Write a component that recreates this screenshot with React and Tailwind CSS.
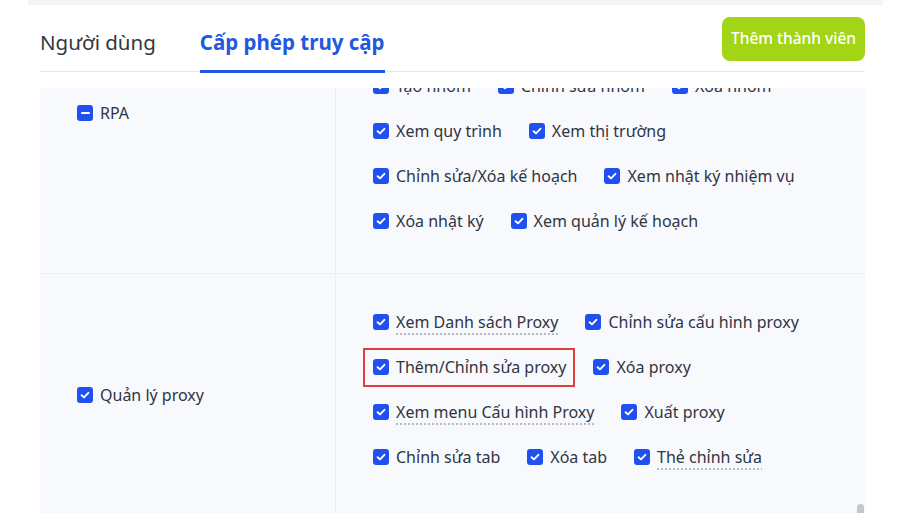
import React from 'react';

const rpaLines = [
  [{ label: 'Tạo nhóm' }, { label: 'Chỉnh sửa nhóm' }, { label: 'Xóa nhóm' }],
  [{ label: 'Xem quy trình' }, { label: 'Xem thị trường' }],
  [{ label: 'Chỉnh sửa/Xóa kế hoạch' }, { label: 'Xem nhật ký nhiệm vụ' }],
  [{ label: 'Xóa nhật ký' }, { label: 'Xem quản lý kế hoạch' }],
];

const proxyLines = [
  [{ label: 'Xem Danh sách Proxy', dotted: true }, { label: 'Chỉnh sửa cấu hình proxy' }],
  [{ label: 'Thêm/Chỉnh sửa proxy', marked: true }, { label: 'Xóa proxy' }],
  [{ label: 'Xem menu Cấu hình Proxy', dotted: true }, { label: 'Xuất proxy' }],
  [{ label: 'Chỉnh sửa tab' }, { label: 'Xóa tab' }, { label: 'Thẻ chỉnh sửa', dotted: true }],
];

const Box = ({ partial }) => (
  <span className="w-4 h-4 rounded-[3px] bg-[#2050f0] flex items-center justify-center shrink-0">
    {partial ? (
      <span className="w-[9px] h-[2.5px] bg-white rounded-sm"></span>
    ) : (
      <svg width="10" height="10" viewBox="0 0 10 10" fill="none">
        <path d="M1.6 5.2 4 7.4 8.4 2.8" stroke="white" strokeWidth="1.9" strokeLinecap="round" strokeLinejoin="round" />
      </svg>
    )}
  </span>
);

const Perm = ({ label, dotted, marked }) => (
  <div className="relative flex items-center gap-[7px] h-6">
    <Box />
    <span className={dotted ? 'underline decoration-dotted decoration-[#a0a6b2] underline-offset-[6px]' : ''}>
      {label}
    </span>
    {/* annotation box */}
    {marked && <span className="absolute -left-[10px] -right-[9px] -top-[7px] -bottom-[8px] border-2 border-[#e0403a]"></span>}
  </div>
);

const PermLines = ({ lines }) => (
  <div>
    {lines.map((line, i) => (
      <div key={i} className="h-[45px] flex items-center gap-x-[27px]">
        {line.map(p => (
          <Perm key={p.label} {...p} />
        ))}
      </div>
    ))}
  </div>
);

export default function App() {
  return (
    <div className="relative w-[912px] h-[513px] bg-white overflow-hidden font-['Noto_Sans',sans-serif] text-[#2f3542]">
      <div className="ml-[28px] w-[855px] h-full flex flex-col">
        <div className="h-[5px] bg-[#f3f4f6] shrink-0"></div>

        {/* Header */}
        <div className="px-[12px] pr-[18px] shrink-0">
          <div className="pt-3 flex items-start justify-between border-b border-[#e4e6eb]">
            <div className="flex gap-[44px] text-[20.5px] leading-[28px]">
              <div className="pt-[11px] pb-[14px] border-b-[3px] border-transparent -mb-[2px] text-[#333840]">
                Người dùng
              </div>
              <div className="pt-[11px] pb-[14px] border-b-[3px] border-[#2457e0] -mb-[2px] text-[#2457e0] font-bold">
                Cấp phép truy cập
              </div>
            </div>
            <button className="h-[44px] w-[143px] rounded-[8px] bg-[#a3d517] text-white text-[15.5px] font-medium">
              Thêm thành viên
            </button>
          </div>
        </div>

        {/* Table, scrolled */}
        <div className="mt-[16px] mx-[12px] mr-[18px] flex-1 overflow-hidden">
          <div className="-mt-[51px] bg-[#f8f9fd] text-[16px] leading-6">
            <div className="flex border-b border-[#eceef3]">
              <div className="w-[295px] shrink-0 pl-[37px] pt-[64px]">
                <div className="flex items-center gap-[7px] h-6">
                  <Box partial />
                  <span>RPA</span>
                </div>
              </div>
              <div className="flex-1 border-l border-[#eceef3] pl-[37px] pt-[26px] pb-[30px]">
                <PermLines lines={rpaLines} />
              </div>
            </div>

            <div className="flex">
              <div className="w-[295px] shrink-0 pl-[37px] flex items-center">
                <div className="flex items-center gap-[7px] h-6">
                  <Box />
                  <span>Quản lý proxy</span>
                </div>
              </div>
              <div className="flex-1 border-l border-[#eceef3] pl-[37px] pt-[25px] pb-[37px]">
                <PermLines lines={proxyLines} />
              </div>
            </div>
          </div>
        </div>
      </div>

      {/* scrollbar thumb */}
      <div className="absolute left-[857px] top-[504px] w-[7px] h-[12px] rounded-full bg-[#c4c6cc]"></div>
    </div>
  );
}
